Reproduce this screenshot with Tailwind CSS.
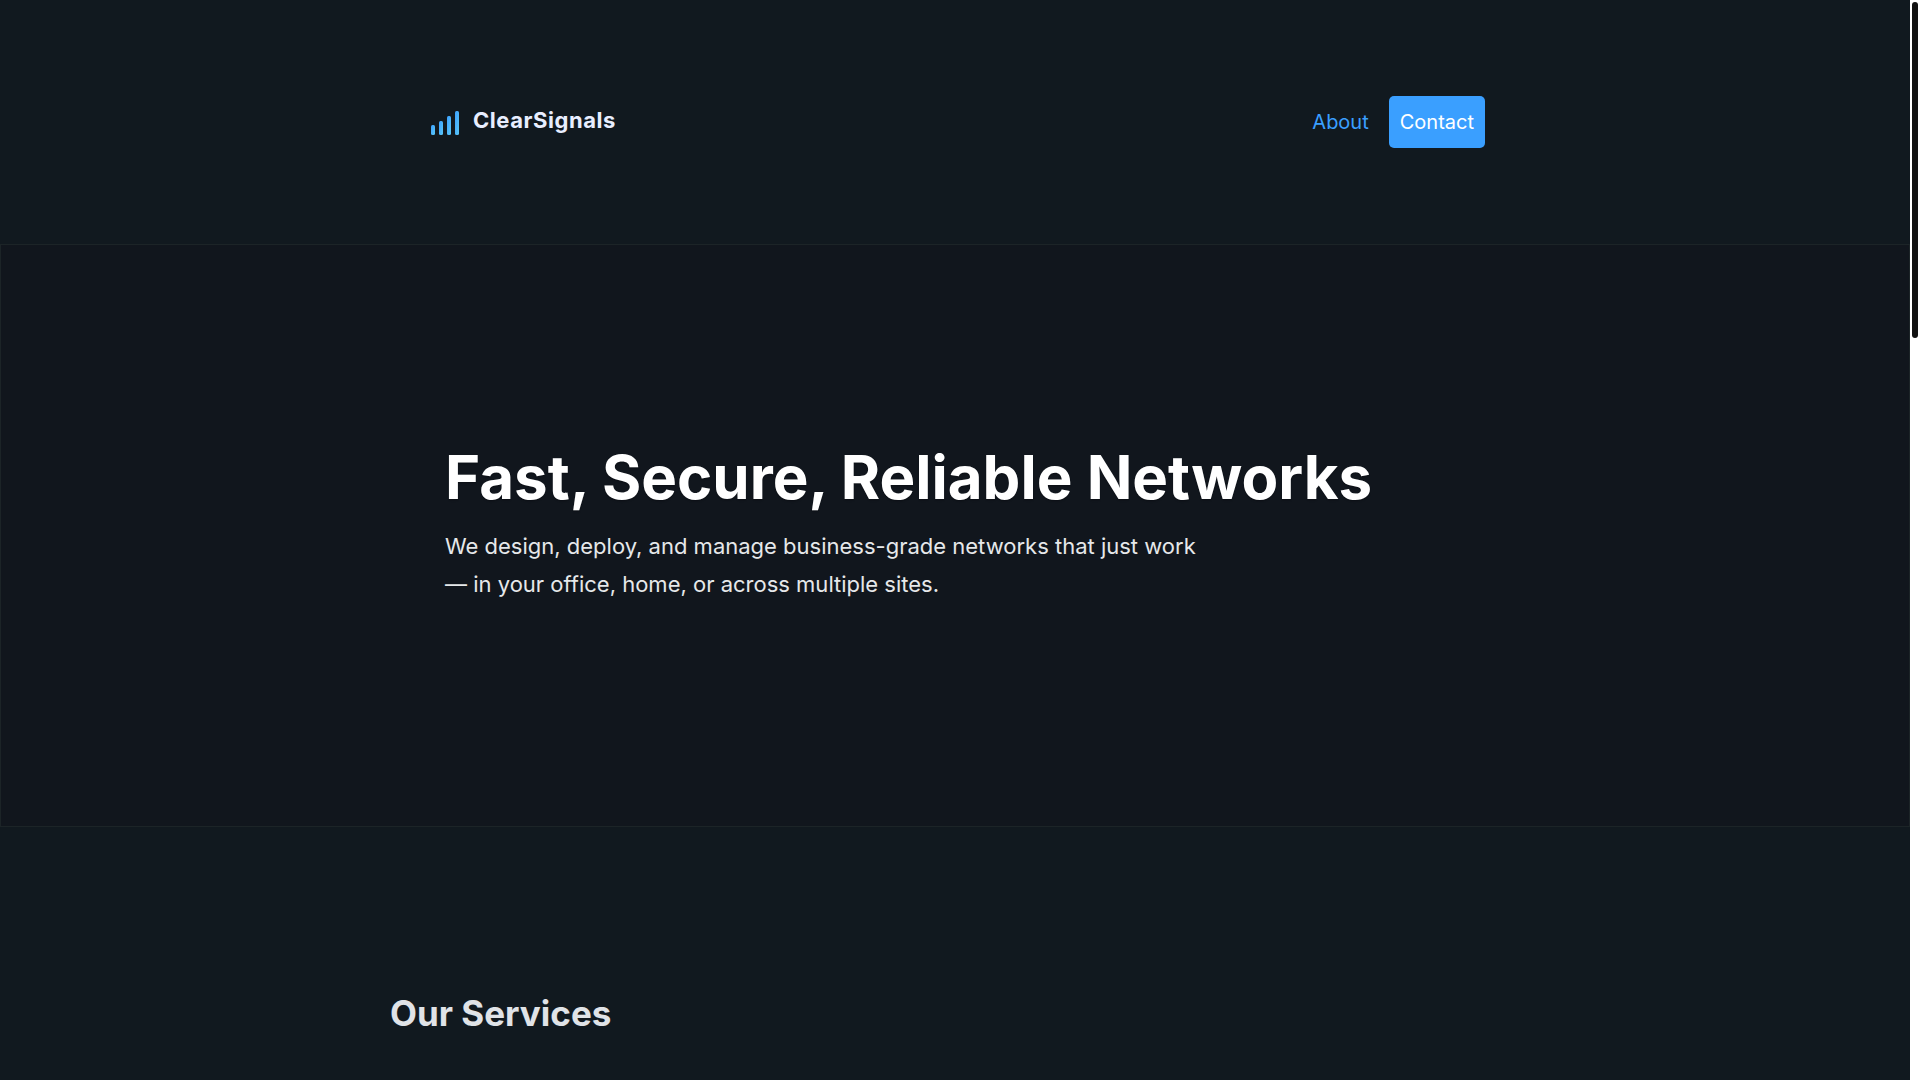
<!DOCTYPE html>
<html lang="en">
  <head>
    <meta charset="utf-8">
    <meta name="viewport" content="width=device-width, initial-scale=1">
    <title>ClearSignals</title>
    <script src="https://cdn.jsdelivr.net/npm/@tailwindcss/browser@4"></script>
  </head>
  <body class="flex h-screen overflow-hidden bg-[#11191f] font-['Inter',sans-serif] text-xl text-[#e6e8ea]">
    <div id="page" class="h-full grow overflow-hidden">
      <header class="mx-auto max-w-[1130px] px-[35px] py-24">
        <nav class="flex items-center justify-between">
          <a href="#" class="flex items-start gap-3 text-[22px] leading-7 font-bold tracking-wide text-[#e8eeff]">
            <svg xmlns="http://www.w3.org/2000/svg" width="36" height="32" viewBox="0 0 36 32" fill="url(#signal)" aria-hidden="true">
              <defs>
                <linearGradient id="signal" x1="0" y1="0" x2="1" y2="1">
                  <stop offset="0" stop-color="#3a9fff"></stop>
                  <stop offset="1" stop-color="#5bc8f5"></stop>
                </linearGradient>
              </defs>
              <rect x="6" y="19" width="4" height="10" rx="1.5"></rect>
              <rect x="14" y="15" width="4" height="14" rx="1.5"></rect>
              <rect x="22" y="10" width="4" height="19" rx="1.5"></rect>
              <rect x="30" y="5" width="4" height="24" rx="1.5"></rect>
            </svg>
            ClearSignals
          </a>
          <div class="flex items-center gap-5">
            <a href="#about" class="text-[#3a9fff]">About</a>
            <a href="#contact" class="rounded-[5px] bg-[#3a9fff] px-[11px] py-3 text-white">Contact</a>
          </div>
        </nav>
      </header>
      <section class="border border-[#1c2427] bg-[#11161d] pt-48 pb-[223px]">
        <div class="mx-auto max-w-[1130px] px-[55px]">
          <h1 class="text-[60px] leading-[80px] font-bold text-white text-shadow-sm">Fast, Secure, Reliable Networks</h1>
          <p class="mt-[10px] max-w-3xl text-[22px] leading-[38px]">We design, deploy, and manage business-grade networks that just work — in your office, home, or across multiple sites.</p>
        </div>
      </section>
      <main class="mx-auto max-w-[1130px] py-40">
        <h2 class="text-[35px] leading-[52px] font-bold text-[#e0e3e7]">Our Services</h2>
      </main>
    </div>
    <!-- scrollbar -->
    <div class="w-[10px] shrink-0 bg-white px-[2px] py-[2px]" aria-hidden="true">
      <div class="h-[336px] rounded-full bg-[#111111]"></div>
    </div>
  </body>
</html>
